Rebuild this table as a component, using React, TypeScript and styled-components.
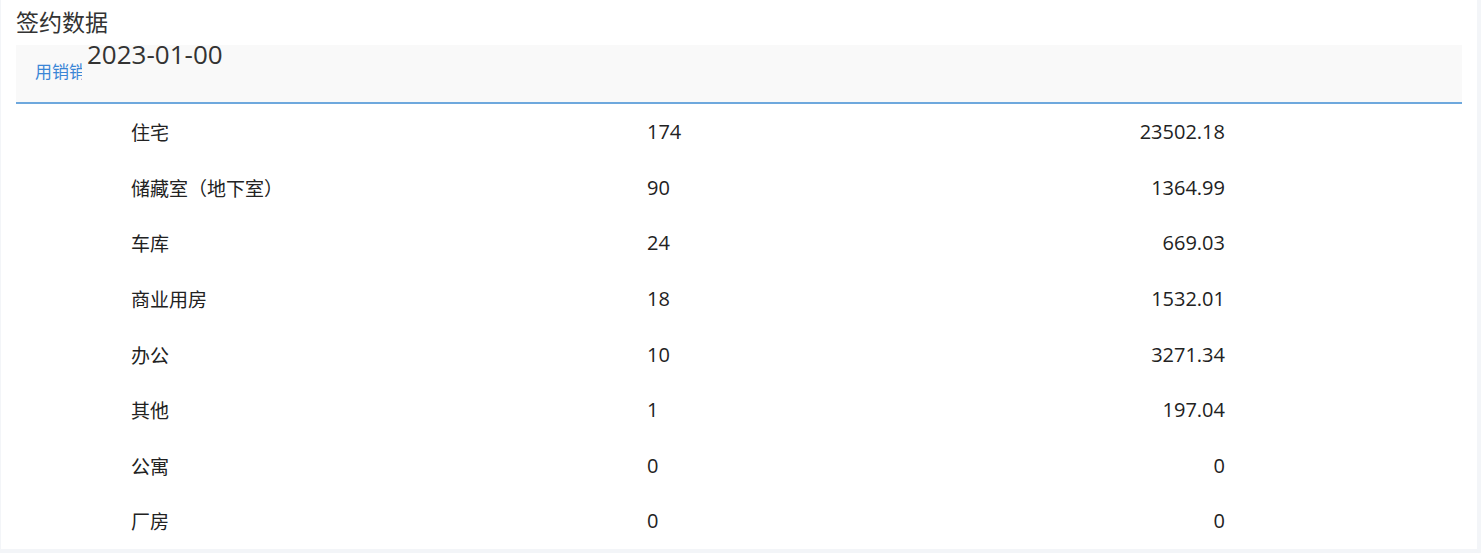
import styled, { createGlobalStyle } from "styled-components";

const GlobalStyle = createGlobalStyle`
  html, body {
    margin: 0;
    padding: 0;
    background: #f3f5f8;
  }
  body {
    font-family: "Open Sans", "Noto Sans CJK SC", sans-serif;
    color: #222;
  }
`;

const Page = styled.div`
  padding: 0 4px 4px 1px;
`;

const Card = styled.div`
  background: #ffffff;
  padding: 0 15px;
  height: 549px;
  box-sizing: border-box;
`;

const Title = styled.div`
  font-family: "Noto Sans CJK SC", sans-serif;
  font-size: 23px;
  line-height: 43px;
  height: 45px;
  color: #333;
`;

const TabBar = styled.div`
  position: relative;
  height: 59px;
  background: #f9f9f9;
  border-bottom: 2px solid #6ea8dd;
  display: flex;
  align-items: flex-start;
  padding: 13px 0 0 19px;
  box-sizing: border-box;
`;

const Tab = styled.div`
  width: 47px;
  overflow: hidden;
  white-space: nowrap;
  font-family: "Noto Sans CJK SC", sans-serif;
  font-size: 17px;
  line-height: 26px;
  color: #3b86d6;
`;

const DateStamp = styled.div`
  position: absolute;
  left: 71px;
  top: -9px;
  font-family: "Open Sans", sans-serif;
  font-size: 26px;
  line-height: 36px;
  color: #333;
`;

const Table = styled.div`
  display: flex;
  flex-direction: column;
`;

const Row = styled.div`
  display: grid;
  grid-template-columns: 516px 289px 289px;
  align-items: center;
  height: 55.6px;
  padding-left: 115px;
`;

const Label = styled.div`
  font-family: "Noto Sans CJK SC", sans-serif;
  font-size: 19px;
  color: #222;
`;

const Value = styled.div<{ $right?: boolean }>`
  font-family: "Open Sans", sans-serif;
  font-size: 20px;
  color: #222;
  text-align: ${(p) => (p.$right ? "right" : "left")};
`;

const rows = [
  { name: "住宅", count: "174", area: "23502.18" },
  { name: "储藏室（地下室）", count: "90", area: "1364.99" },
  { name: "车库", count: "24", area: "669.03" },
  { name: "商业用房", count: "18", area: "1532.01" },
  { name: "办公", count: "10", area: "3271.34" },
  { name: "其他", count: "1", area: "197.04" },
  { name: "公寓", count: "0", area: "0" },
  { name: "厂房", count: "0", area: "0" },
];

function App() {
  return (
    <>
      <GlobalStyle />
      <Page>
        <Card>
          <Title>签约数据</Title>
          <TabBar>
            <Tab>用销销售</Tab>
            <DateStamp>2023-01-00</DateStamp>
          </TabBar>
          <Table>
            {rows.map((r) => (
              <Row key={r.name}>
                <Label>{r.name}</Label>
                <Value>{r.count}</Value>
                <Value $right>{r.area}</Value>
              </Row>
            ))}
          </Table>
        </Card>
      </Page>
    </>
  );
}

export default App;
